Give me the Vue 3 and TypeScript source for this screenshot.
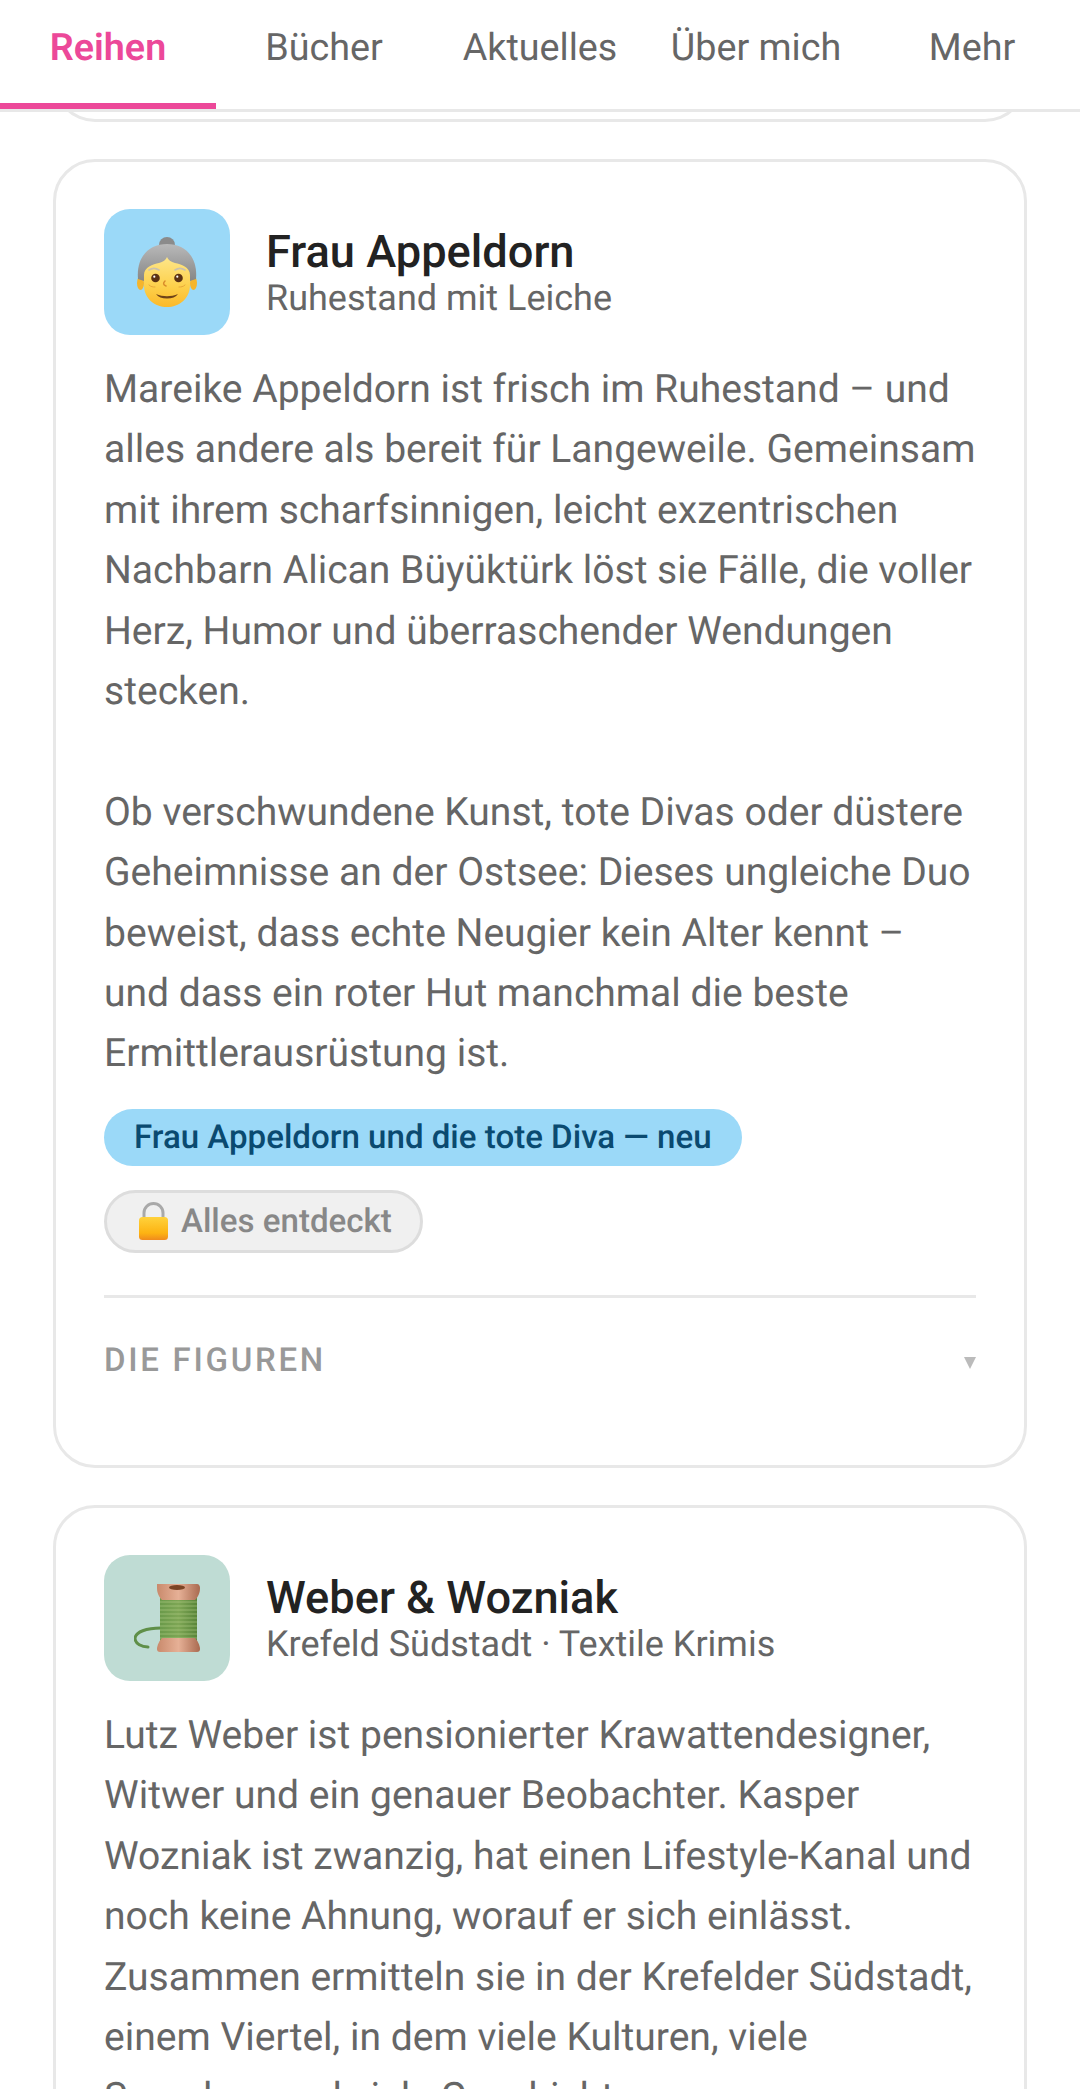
<script setup lang="ts">
interface Tab {
  label: string
  active?: boolean
}

const tabs: Tab[] = [
  { label: 'Reihen', active: true },
  { label: 'Bücher' },
  { label: 'Aktuelles' },
  { label: 'Über mich' },
  { label: 'Mehr' },
]
</script>

<template>
  <div class="page">
    <nav class="tabs">
      <div v-for="tab in tabs" :key="tab.label" class="tab" :class="{ active: tab.active }">
        {{ tab.label }}
      </div>
    </nav>

    <main class="list">
      <div class="card-end"></div>

      <section class="card">
        <header class="card-head">
          <div class="icon icon-blue">
            <svg width="60" height="70" viewBox="0 0 60 70">
              <defs>
                <linearGradient id="hair" x1="0" y1="0" x2="0" y2="1">
                  <stop offset="0" stop-color="#b9b9b9" />
                  <stop offset="1" stop-color="#868686" />
                </linearGradient>
                <linearGradient id="face" x1="0" y1="0" x2="0" y2="1">
                  <stop offset="0" stop-color="#fde68a" />
                  <stop offset="0.600" stop-color="#fdd04a" />
                  <stop offset="1" stop-color="#fbb92a" />
                </linearGradient>
              </defs>
              <circle cx="30" cy="8" r="8" fill="#8b8b8b" />
              <ellipse cx="3.5" cy="46" rx="3.5" ry="7" fill="#f5b52c" />
              <ellipse cx="56.500" cy="46" rx="3.5" ry="7" fill="#f5b52c" />
              <path d="M1 42C-1 20 12 7 30 7s31 13 29 35l-6 2H7z" fill="url(#hair)" />
              <path d="M7 38C7 30 16 27 22 26c4-1 7-3 8-6 1 3 4 5 8 6 6 1 15 4 15 12v10c0 14-11 22-23 22S7 62 7 48z" fill="url(#face)" />
              <path d="M12 33c3-2 7-2 10 0M38 33c3-2 7-2 10 0" fill="none" stroke="#c9c1ae" stroke-width="1.600" stroke-linecap="round" />
              <circle cx="18.500" cy="41" r="4.300" fill="#5b3213" />
              <circle cx="41.500" cy="41" r="4.300" fill="#5b3213" />
              <circle cx="17.300" cy="39.700" r="1.100" fill="#fff" />
              <circle cx="40.300" cy="39.700" r="1.100" fill="#fff" />
              <path d="M28 44c-2 2-2 4 1 5" fill="none" stroke="#d98c2b" stroke-width="1.500" stroke-linecap="round" />
              <path d="M19 57c7 3 15 3 22 0-2 3-6 4.500-11 4.500S21 60 19 57z" fill="#6e4218" />
              <path d="M12 48c2 2 4 2 6 2M42 50c2 0 4 0 6-2" fill="none" stroke="#e8a93a" stroke-width="1" stroke-linecap="round" />
            </svg>
          </div>
          <div class="head-text">
            <h2>Frau Appeldorn</h2>
            <p class="sub">Ruhestand mit Leiche</p>
          </div>
        </header>

        <p class="body">
          Mareike Appeldorn ist frisch im Ruhestand – und alles andere als bereit für Langeweile. Gemeinsam mit ihrem scharfsinnigen, leicht exzentrischen Nachbarn Alican Büyüktürk löst sie Fälle, die voller Herz, Humor und überraschender Wendungen stecken.<br /><br />Ob verschwundene Kunst, tote Divas oder düstere Geheimnisse an der Ostsee: Dieses ungleiche Duo beweist, dass echte Neugier kein Alter kennt – und dass ein roter Hut manchmal die beste Ermittlerausrüstung ist.
        </p>

        <div class="pills">
          <span class="pill pill-new">Frau Appeldorn und die tote Diva — neu</span>
          <span class="pill pill-locked">
            <svg class="lock" width="31" height="38" viewBox="0 0 31 38">
              <defs>
                <linearGradient id="lockBody" x1="0" y1="0" x2="0" y2="1">
                  <stop offset="0" stop-color="#ffd23c" />
                  <stop offset="0.700" stop-color="#fdb312" />
                  <stop offset="1" stop-color="#f08a1d" />
                </linearGradient>
              </defs>
              <path d="M6 17V11a9.500 9.500 0 0 1 19 0v6" fill="none" stroke="#a9a9a9" stroke-width="3" />
              <rect x="1" y="15" width="29" height="23" rx="3.500" fill="url(#lockBody)" />
            </svg>
            Alles entdeckt
          </span>
        </div>

        <div class="figures">
          <span class="figures-label">DIE FIGUREN</span>
          <span class="caret"></span>
        </div>
      </section>

      <section class="card">
        <header class="card-head">
          <div class="icon icon-green">
            <svg width="66" height="68" viewBox="0 0 66 68">
              <defs>
                <linearGradient id="wood" x1="0" y1="0" x2="1" y2="0">
                  <stop offset="0" stop-color="#c98a6c" />
                  <stop offset="0.500" stop-color="#e6b096" />
                  <stop offset="1" stop-color="#a96a50" />
                </linearGradient>
                <linearGradient id="thread" x1="0" y1="0" x2="1" y2="0">
                  <stop offset="0" stop-color="#6a9a4a" />
                  <stop offset="0.500" stop-color="#7ea655" />
                  <stop offset="1" stop-color="#588539" />
                </linearGradient>
              </defs>
              <path d="M27 44C12 44 2 48 1 54c0 6 7 9 13 9" fill="none" stroke="#5f8f48" stroke-width="3" stroke-linecap="round" />
              <rect x="26" y="10" width="37" height="48" fill="url(#thread)" />
              <path d="M26 18h37M26 22h37M26 26h37M26 30h37M26 34h37M26 38h37M26 42h37M26 46h37M26 50h37M26 54h37" stroke="#c3d998" stroke-width="0.800" opacity="0.600" />
              <path d="M23 0h40c2 0 3 2 3 4 0 6-3 10-5 12H28c-2-2-5-6-5-12 0-2 0-4 0-4z" fill="url(#wood)" />
              <ellipse cx="43" cy="3.500" rx="8" ry="2.500" fill="#7c4526" />
              <path d="M28 54h33c2 2 5 7 5 11 0 2-1 3-3 3H26c-2 0-3-1-3-3 0-4 3-9 5-11z" fill="url(#wood)" />
            </svg>
          </div>
          <div class="head-text">
            <h2>Weber &amp; Wozniak</h2>
            <p class="sub">Krefeld Südstadt · Textile Krimis</p>
          </div>
        </header>

        <p class="body">
          Lutz Weber ist pensionierter Krawattendesigner, Witwer und ein genauer Beobachter. Kasper Wozniak ist zwanzig, hat einen Lifestyle-Kanal und noch keine Ahnung, worauf er sich einlässt. Zusammen ermitteln sie in der Krefelder Südstadt, einem Viertel, in dem viele Kulturen, viele Sprachen und viele Geschichten
        </p>
      </section>
    </main>
  </div>
</template>

<style scoped>
.page {
  height: 100vh;
  overflow: hidden;
  background: #fff;
  font-family: Roboto, 'Liberation Sans', sans-serif;
  text-rendering: geometricPrecision;
}

.tabs {
  position: relative;
  z-index: 1;
  display: grid;
  grid-template-columns: repeat(5, 1fr);
  height: 112px;
  box-sizing: border-box;
  border-bottom: 3px solid #e8e8e8;
  background: #fff;
}

.tab {
  height: 109px;
  box-sizing: border-box;
  padding-top: 28px;
  text-align: center;
  font-size: 37.7px;
  line-height: 40px;
  color: #666;
}

.tab.active {
  border-bottom: 6px solid #ec4899;
  color: #ec4899;
  font-weight: 600;
}

.list {
  display: flex;
  flex-direction: column;
  gap: 37px;
  padding: 0 53px;
}

.card-end {
  height: 60px;
  margin-top: -50px;
  box-sizing: border-box;
  border: 3px solid #e8e8e8;
  border-top: none;
  border-radius: 0 0 42px 42px;
}

.card {
  box-sizing: border-box;
  padding: 47px 48px;
  border: 3px solid #e8e8e8;
  border-radius: 42px;
  background: #fff;
}

.card-head {
  display: flex;
  align-items: center;
  gap: 36px;
  margin-bottom: 24px;
}

.head-text {
  padding-top: 3px;
}

.icon {
  flex: none;
  display: flex;
  align-items: center;
  justify-content: center;
  width: 126px;
  height: 126px;
  border-radius: 26px;
}

.icon-blue {
  background: #9bd9f8;
}

.icon-green {
  background: #bfdcd4;
}

h2 {
  margin: 0;
  font-size: 45.2px;
  line-height: 48px;
  font-weight: 500;
  color: #222;
}

.sub {
  margin: 0;
  padding-top: 1px;
  font-size: 36px;
  line-height: 40px;
  color: #666;
}

.body {
  margin: 0;
  font-size: 39.05px;
  line-height: 60.4px;
  color: #666;
}

.pills {
  display: flex;
  flex-direction: column;
  align-items: flex-start;
  gap: 24px;
  margin-top: 25px;
}

.pill {
  display: inline-flex;
  align-items: center;
  box-sizing: border-box;
  border-radius: 32px;
  font-size: 33.1px;
  font-weight: 500;
}

.pill-new {
  height: 57px;
  padding: 0 30px;
  background: #9bd9f8;
  color: #0a4a70;
}

.pill-locked {
  height: 63px;
  gap: 12px;
  padding: 0 28px 0 31px;
  border: 3px solid #ddd;
  background: #f0f0f0;
  color: #888;
}

.figures {
  display: flex;
  align-items: center;
  justify-content: space-between;
  margin-top: 42px;
  padding: 43px 0 37px;
  border-top: 3px solid #e8e8e8;
}

.figures-label {
  font-size: 33px;
  line-height: 40px;
  font-weight: 500;
  letter-spacing: 2.7px;
  color: #999;
}

.caret {
  width: 0;
  height: 0;
  margin-top: 4px;
  border-left: 6px solid transparent;
  border-right: 6px solid transparent;
  border-top: 12px solid #bbb;
}
</style>

<style>
html,
body {
  margin: 0;
  background: #fff;
}
</style>
